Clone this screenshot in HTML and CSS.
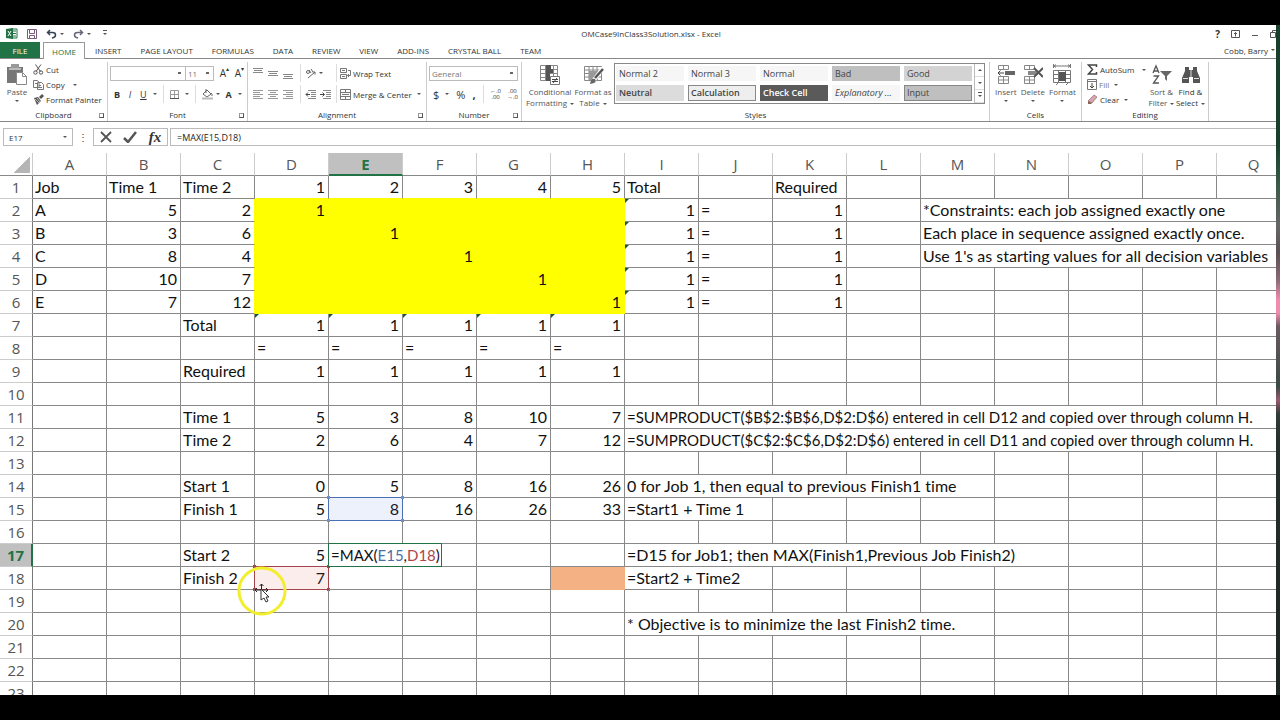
FILE: index.html
```
<!DOCTYPE html>
<html lang="en">
<head>
<meta charset="utf-8">
<title>OMCase9InClass3Solution.xlsx - Excel</title>
<link rel="stylesheet" href="styles.css">
</head>
<body>
<div class="frame">
<div class="app">
  <header class="titlebar">
    <div class="quick">
      <svg class="logo" width="12" height="11" viewBox="0 0 12 11"><path d="M5 1h6v9H5z" fill="#fff" stroke="#217346"/><path d="M7 3h3M7 5.500h3M7 8h3" stroke="#217346"/><path d="M0 1l7-1v11l-7-1z" fill="#217346"/><path d="M2 3l3 5M5 3L2 8" stroke="#fff"/></svg>
      <button class="ic" aria-label="Save"><svg width="10" height="10" viewBox="0 0 10 10" fill="none" stroke="#7a5a7e"><path d="M.5.5h9v9h-9z"/><path d="M2.500.5v4h5v-4M2.500 9.500v-3h5v3"/></svg></button>
      <button class="ic undo" aria-label="Undo"><svg width="11" height="10" viewBox="0 0 11 10" fill="none" stroke="#345" stroke-width="1.500"><path d="M4 1L1.500 3.500 4 6M2 3.500h4.500q3 0 3 2.500T6 9"/></svg><i class="caret"></i></button>
      <button class="ic redo" aria-label="Redo"><svg width="11" height="10" viewBox="0 0 11 10" fill="none" stroke="#667" stroke-width="1.500"><path d="M7 1l2.500 2.500L7 6M9 3.500H4.500q-3 0-3 2.500T5 9"/></svg><i class="caret"></i></button>
      <button class="ic" aria-label="Customize Quick Access Toolbar"><i class="caret bar"></i></button>
    </div>
    <h1>OMCase9InClass3Solution.xlsx - Excel</h1>
    <div class="winbtns">
      <button class="ic help" aria-label="Help">?</button>
      <button class="ic" aria-label="Ribbon Display Options"><svg width="9" height="8" viewBox="0 0 9 8" fill="none" stroke="#555"><path d="M.5.5h8v7h-8zM4.500 6.500v-4M3 4l1.500-1.500L6 4"/></svg></button>
      <button class="ic" aria-label="Minimize"><svg width="8" height="8" viewBox="0 0 8 8"><path d="M1 5.500h6" stroke="#555"/></svg></button>
      <button class="ic" aria-label="Restore"><svg width="6" height="8" viewBox="0 0 6 8" fill="none" stroke="#555"><path d="M.5 2.500h5v5h-5zM2.500 2V.5h5v5H6"/></svg></button>
    </div>
  </header>

  <nav class="tabs">
    <button class="file">FILE</button>
    <button class="active">HOME</button>
    <button>INSERT</button><button>PAGE LAYOUT</button><button>FORMULAS</button><button>DATA</button><button>REVIEW</button><button>VIEW</button><button>ADD-INS</button><button>CRYSTAL BALL</button><button>TEAM</button>
    <button class="user">Cobb, Barry <i class="caret"></i></button>
  </nav>

  <section class="ribbon">
    <div class="group clipboard">
      <div class="body">
        <button class="big"><svg width="22" height="22" viewBox="0 0 22 22"><path d="M1 3h16v16H1z" fill="#777"/><path d="M5 0h8v4H5z" fill="#999"/><path d="M3 5h12" stroke="#fff"/><path d="M10.500 8.500h6l4 4v8h-10z" fill="#fff" stroke="#888"/><path d="M16.500 8.500v4h4" fill="none" stroke="#888"/></svg><span>Paste</span><i class="caret"></i></button>
        <div class="list">
          <button><svg width="11" height="11" viewBox="0 0 11 11" fill="none" stroke="#555"><path d="M2.500.5L7.500 7.500M8 .5L3 7.500"/><circle cx="2.500" cy="8.500" r="1.700"/><circle cx="8" cy="8.500" r="1.700"/></svg>Cut</button>
          <button><svg width="11" height="11" viewBox="0 0 11 11" fill="#fff" stroke="#777"><path d="M.5 1.500h4l1.500 2v5H.5zM4.500 3.500h4l2 2v5h-6z"/><path d="M6 6.500h2M6 8.500h3M2 4.500h2"/></svg>Copy<i class="caret wide"></i></button>
          <button><svg width="11" height="11" viewBox="0 0 11 11"><path d="M6 3l3-3 2 2-3 3z" fill="#555"/><path d="M1 4l4-1 3 4-4 4z" fill="#555"/><path d="M2 5l4 4M4 4l3 4" stroke="#fff" stroke-width=".6"/></svg>Format Painter</button>
        </div>
      </div>
      <footer>Clipboard<i class="launch"></i></footer>
    </div>

    <div class="group font">
      <div class="body rows">
        <div class="row"><select aria-label="Font" class="fname"><option></option></select><select aria-label="Font size" class="fsize"><option>11</option></select><button class="ic grow" aria-label="Increase font size">A<sup>▴</sup></button><button class="ic shrink" aria-label="Decrease font size">A<sup>▾</sup></button></div>
        <div class="row second"><button class="ic"><b>B</b></button><button class="ic ital"><i>I</i></button><button class="ic"><u>U</u><i class="caret wide"></i></button><span class="sep"></span><button class="ic" aria-label="Borders"><svg width="9" height="9" viewBox="0 0 9 9" fill="none" stroke="#999"><path d="M.5.5h8v8h-8zM4.500 0v9M0 4.500h9"/><path d="M0 8.500h9" stroke="#555"/></svg><i class="caret wide"></i></button><span class="sep"></span><button class="ic" aria-label="Fill color"><svg width="11" height="11" viewBox="0 0 11 11" fill="none" stroke="#666"><path d="M1 5l4-4 4 4-4 3zM4 0v4M9 4q1.500 1 1 3"/><path d="M0 9.500h11" stroke="#bbb" stroke-width="2"/></svg><i class="caret"></i></button><button class="ic fc" aria-label="Font color"><b>A</b><i class="caret wide"></i></button></div>
      </div>
      <footer>Font<i class="launch"></i></footer>
    </div>

    <div class="group align">
      <div class="body rows">
        <div class="row"><div class="aligns"><button class="ic" aria-label="Top align"><svg width="10" height="12"><path d="M0 1.500h10M1 3.500h8M0 5.500h10" stroke="#888"/></svg></button><button class="ic" aria-label="Middle align"><svg width="10" height="12"><path d="M0 4.500h10M1 6.500h8M0 8.500h10" stroke="#888"/></svg></button><button class="ic" aria-label="Bottom align"><svg width="10" height="12"><path d="M0 7.500h10M1 9.500h8M0 11.500h10" stroke="#888"/></svg></button></div><span class="sep"></span><div class="mid"><button class="ic" aria-label="Orientation"><svg width="11" height="11" viewBox="0 0 11 11" fill="none" stroke="#666"><circle cx="3" cy="4" r="1.500"/><path d="M4 2l2 3M6 1l2 3M3 10l7-6M10 4H7.500M10 4v2.500"/></svg><i class="caret"></i></button></div><span class="sep"></span><button class="ic text"><svg width="11" height="11" viewBox="0 0 11 11" fill="none" stroke="#777"><path d="M.5.5h6v4h-6zM.5 6.500h6v4h-6zM8 2.500h2.500v5H7.500M9 6L7.500 7.500 9 9M2 2.500h3M2 8.500h3"/></svg>Wrap Text</button></div>
        <div class="row second"><div class="aligns"><button class="ic" aria-label="Align left"><svg width="10" height="9"><path d="M0 .5h10M0 2.500h7M0 4.500h10M0 6.500h7M0 8.500h10" stroke="#999"/></svg></button><button class="ic" aria-label="Center"><svg width="10" height="9"><path d="M0 .5h10M2 2.500h6M0 4.500h10M2 6.500h6M0 8.500h10" stroke="#999"/></svg></button><button class="ic" aria-label="Align right"><svg width="10" height="9"><path d="M0 .5h10M3 2.500h7M0 4.500h10M3 6.500h7M0 8.500h10" stroke="#999"/></svg></button></div><span class="sep"></span><div class="mid"><button class="ic" aria-label="Decrease indent"><svg width="11" height="9" fill="none" stroke="#888"><path d="M3 .5h8M6 2.500h5M6 4.500h5M6 6.500h5M3 8.500h8"/><path d="M5 4.500H1M3 2.500l-2 2 2 2" stroke="#444"/></svg></button><button class="ic" aria-label="Increase indent"><svg width="11" height="9" fill="none" stroke="#888"><path d="M3 .5h8M6 2.500h5M6 4.500h5M6 6.500h5M3 8.500h8"/><path d="M0 4.500h4M2.500 2.500l2 2-2 2" stroke="#444"/></svg></button></div><span class="sep"></span><button class="ic text"><svg width="11" height="11" viewBox="0 0 11 11" fill="none" stroke="#777"><path d="M.5.5h10v10H.5zM0 3.500h11M0 7.500h11M5.500 0v3M5.500 8v3M2 5.500h7"/></svg>Merge &amp; Center<i class="caret"></i></button></div>
      </div>
      <footer>Alignment<i class="launch"></i></footer>
    </div>

    <div class="group number">
      <div class="body rows">
        <div class="row"><select aria-label="Number format" class="nfmt"><option>General</option></select></div>
        <div class="row second"><button class="ic sym">$<i class="caret wide"></i></button><button class="ic sym">%</button><button class="ic sym"><b>,</b></button><span class="sep"></span><button class="ic dec" aria-label="Increase decimal"><span>←.0</span><span>.00</span></button><button class="ic dec" aria-label="Decrease decimal"><span>.00</span><span>→.0</span></button></div>
      </div>
      <footer>Number<i class="launch"></i></footer>
    </div>

    <div class="group styles">
      <div class="body">
        <button class="big cf"><svg width="22" height="22" viewBox="0 0 22 22"><path d="M1.500 1.500h17v15h-17zM1 5.500h18M1 9.500h18M1 13.500h18M6.500 1v16M14.500 1v16" fill="none" stroke="#888"/><path d="M7 1h5v4h2v4h-3v8H7z" fill="#555"/><path d="M11.500 12.500h9v8h-9z" fill="#fff" stroke="#777"/><path d="M13 15.500h6M13 17.500h6M18 14l-4 5" stroke="#444" fill="none"/></svg><span>Conditional<br>Formatting<i class="caret"></i></span></button>
        <button class="big ft"><svg width="22" height="22" viewBox="0 0 22 22"><path d="M2.500 2.500h17v14h-17zM2 6h18M2 9.500h18M2 13h18M7 2v15M11 2v15M15 2v15" fill="none" stroke="#888"/><path d="M7 7h9v9H7z" fill="#999"/><path d="M21 4L12 16" stroke="#fff" stroke-width="4"/><path d="M21 5l-8 9" stroke="#555" stroke-width="2.500"/><path d="M8 20q1-6 5-5 3 4-5 5z" fill="#666"/></svg><span>Format as<br>Table<i class="caret"></i></span></button>
        <div class="gallery">
          <div class="swatches">
            <button>Normal 2</button><button>Normal 3</button><button>Normal</button><button class="bad">Bad</button><button class="good">Good</button>
            <button class="neutral">Neutral</button><button class="calc">Calculation</button><button class="check">Check Cell</button><button class="expl">Explanatory ...</button><button class="input">Input</button>
          </div>
          <div class="scroll"><button aria-label="Previous styles"><i class="caret up"></i></button><button aria-label="Next styles"><i class="caret"></i></button><button aria-label="More styles"><i class="caret bar"></i></button></div>
        </div>
      </div>
      <footer>Styles</footer>
    </div>

    <div class="group cells">
      <div class="body">
        <button class="big"><svg width="20" height="22" viewBox="0 0 20 22"><path d="M2.500 1.500h10v4h-10zM7.500 1.500v4M2.500 12.500h10v7h-10zM7.500 12.500v7M2.500 16h10" fill="none" stroke="#888"/><path d="M9 7h10v4H9z" fill="#666"/><path d="M8 9H2M4.500 6.500L2 9l2.500 2.500" fill="none" stroke="#444"/></svg><span>Insert</span><i class="caret"></i></button>
        <button class="big"><svg width="20" height="22" viewBox="0 0 20 22"><path d="M1.500 1.500h10v4h-10zM6.500 1.500v4M1.500 12.500h10v7h-10zM6.500 12.500v7M1.500 16h10" fill="none" stroke="#888"/><path d="M5 7h9v4H5z" fill="#888"/><path d="M11 4l9 9M20 4l-9 9" fill="none" stroke="#555" stroke-width="2"/></svg><span>Delete</span><i class="caret"></i></button>
        <button class="big"><svg width="20" height="22" viewBox="0 0 20 22"><path d="M1.500 0v4M18.500 0v4M2 2h16M4 .5L2 2l2 1.500M16 .5L18 2l-2 1.500M1.500 6.500h17v12h-17zM1 10.500h18M1 14.500h18M6.500 6v13M13.500 6v13M4 21l2-2M14 21l2-2" fill="none" stroke="#777"/><path d="M7 8h7v9H7z" fill="#555"/></svg><span>Format</span><i class="caret"></i></button>
      </div>
      <footer>Cells</footer>
    </div>

    <div class="group editing">
      <div class="body">
        <div class="list">
          <button><svg width="11" height="11" viewBox="0 0 11 11" fill="none" stroke="#444" stroke-width="1.500"><path d="M9.500 3V1H1.500l4 4.500-4 4.500h8V8"/></svg>AutoSum<i class="caret wide"></i></button>
          <button class="dim"><svg width="10" height="11" viewBox="0 0 10 11" fill="none" stroke="#777"><path d="M.5.5h9v10h-9zM.5 2.500h9"/><path d="M5 4v5M3 7l2 2 2-2" stroke="#444"/></svg>Fill<i class="caret"></i></button>
          <button><svg width="11" height="11" viewBox="0 0 11 11"><path d="M1 7l6-6 3 2-5 6z" fill="#d7a5ad" stroke="#9b6670" stroke-width=".7"/><path d="M1 7l4 2-1 1H1z" fill="#865"/></svg>Clear<i class="caret"></i></button>
        </div>
        <button class="big"><svg width="22" height="22" viewBox="0 0 22 22"><path d="M2 9l3-7 3 7M3 7h4M2.500 12h5l-5 7h5.500" fill="none" stroke="#555" stroke-width="1.300"/><path d="M9 7h12l-5 5v5l-2-2v-3z" fill="#666"/></svg><span>Sort &amp;<br>Filter<i class="caret"></i></span></button>
        <button class="big dark"><svg width="22" height="22" viewBox="0 0 22 22" fill="#555"><path d="M5 3h4v3h4V3h4v4l3 7v5h-7v-6h-4v6H2v-5l3-7z"/><path d="M3 14.500h5M14 14.500h5M11 6v7" stroke="#ddd"/></svg><span>Find &amp;<br>Select<i class="caret"></i></span></button>
      </div>
      <footer>Editing</footer>
    </div>
  </section>

  <section class="formulabar">
    <button class="namebox"><span>E17</span><i class="caret"></i></button>
    <span class="dots">⋮</span>
    <div class="fbtns">
      <button class="ic" aria-label="Cancel"><svg width="12" height="12" viewBox="0 0 12 12" stroke="#555" stroke-width="1.800"><path d="M1 1l10 10M11 1L1 11"/></svg></button>
      <button class="ic" aria-label="Enter"><svg width="14" height="12" viewBox="0 0 14 12" fill="none" stroke="#555" stroke-width="2.500"><path d="M1 7l4 4 8-10"/></svg></button>
      <button class="ic fx" aria-label="Insert Function"><i>fx</i></button>
    </div>
    <input class="formula" aria-label="Formula" value="=MAX(E15,D18)">
  </section>

  <main class="sheet"><table id="grid"></table></main>
</div>
<div class="edge"></div>
</div>
<script src="sheet.js"></script>
</body>
</html>
```
FILE: styles.css
```
* { box-sizing: border-box; }
body { margin: 0; background: #000; font-family: "Open Sans", "Noto Sans", sans-serif; font-size: 8px; color: #333; }
button, input, select { font: inherit; color: inherit; background: none; border: 0; padding: 0; margin: 0; border-radius: 0; }
button { display: flex; align-items: center; white-space: nowrap; }
svg { flex: none; display: block; }

.frame { display: flex; height: 100vh; padding: 25px 0; }
.app { flex: 1; min-width: 0; display: flex; flex-direction: column; background: #fff; overflow: hidden; }
.edge { width: 4px; background: linear-gradient(#173f2c 0 18%, #3c5a48 24%, #666 30%, #5a5054 34%, #8a6a74 38%, #f08cb0 41% 43%, #6a5a60 45%, #3a4a42 54%, #9a5a70 56%, #333c38 58%, #26302b 62%, #1c2420); }

.caret { flex: none; display: inline-block; width: 0; height: 0; border: 2px solid transparent; border-top-color: #555; border-bottom: 0; margin-left: 3px; vertical-align: middle; }
.caret.wide { margin-left: 6px; }
.caret.up { border-top: 0; border-bottom: 2px solid #555; }
.caret.bar { position: relative; }
.caret.bar::before { content: ""; position: absolute; left: -2px; top: -5px; width: 4px; height: 1px; background: #555; }

.titlebar { display: grid; grid-template-columns: 1fr auto 1fr; align-items: center; height: 17px; flex: none; }
.titlebar h1 { margin: 0; font-size: 8px; font-weight: 400; padding-left: 26px; }
.quick { display: flex; align-items: center; gap: 9px; padding-left: 6px; }
.winbtns { display: flex; justify-content: flex-end; align-items: center; gap: 11px; }
.help { font-size: 10px; font-weight: 700; }

.tabs { display: flex; height: 17px; flex: none; font-size: 8px; border-bottom: 1px solid #888; padding-right: 1px; }
.tabs button { margin-right: 19px; }
.tabs .file { width: 40px; justify-content: center; background: #217346; color: #fff; margin-right: 3px; }
.tabs .active { width: 42px; justify-content: center; border: 1px solid #999; border-bottom: 0; background: #fff; color: #217346; height: 17px; margin-right: 10px; }
.tabs .user { margin-left: auto; margin-right: 0; }

.ribbon { display: flex; height: 63px; flex: none; border-bottom: 1px solid #888; padding-top: 3px; }
.group { display: flex; flex-direction: column; flex: none; border-right: 1px solid #ccc; }
.group .body { flex: 1; display: flex; align-items: flex-start; min-height: 0; }
.group footer { display: flex; flex: none; justify-content: center; height: 12px; line-height: 12px; position: relative; }
.launch { position: absolute; right: 3px; bottom: 3px; width: 5px; height: 5px; border: 1px solid #999; border-right-color: #555; border-bottom-color: #555; }
.clipboard { width: 108px; } .font { width: 140px; } .align { width: 179px; } .number { width: 95px; }
.styles { width: 468px; } .cells { width: 92px; } .editing { width: 127px; }
.clipboard .body { padding-left: 6px; gap: 5px; }

.big { flex-direction: column; line-height: 11px; padding-top: 2px; color: #555; text-align: center; }
.big > .caret { margin: 3px 0 0; }
.big.dark { color: #333; }
.list { display: flex; flex-direction: column; }
.list button { height: 15px; gap: 2px; }
.list .dim { color: #777; }

.rows { flex-direction: column; }
.row { display: flex; align-items: center; height: 22px; align-self: stretch; }
.row.second { height: 20px; }
.ic { justify-content: center; }
.sep { width: 1px; height: 18px; background: #ddd; }
select { appearance: none; border: 1px solid #bbb; height: 15px; color: #777; padding-left: 2px; background: linear-gradient(#666, #666) right 4px center / 3px 2px no-repeat; }
.font .rows { padding-left: 2px; }
.fname { width: 76px; } .fsize { width: 29px; margin-left: -1px; }
.grow, .shrink { font-size: 10px; width: 15px; }
.grow { margin-left: 3px; }
sup { font-size: 6px; line-height: 6px; align-self: flex-start; }
.font .second { gap: 6px; padding-left: 4px; font-size: 9px; }
.font .second .ital { width: 8px; }
.align .rows { padding-left: 5px; }
.aligns { display: flex; gap: 5px; width: 47px; }
.mid { display: flex; gap: 4px; width: 35px; padding-left: 4px; }
.text { gap: 2px; padding-left: 3px; }
.number .rows { padding-left: 2px; }
.nfmt { width: 89px; }
.number .second { gap: 7px; padding-left: 4px; }
.sym { font-size: 11px; }
.dec { flex-direction: column; font-size: 6px; line-height: 6px; width: 10px; }

.styles .body { padding-left: 6px; }
.cf { width: 44px; } .ft { width: 42px; }
.gallery { display: flex; height: 41px; border: 1px solid #888; margin-top: 1px; }
.swatches { display: grid; grid-template-columns: repeat(5, 68px); column-gap: 4px; row-gap: 4px; padding: 2px 2px 2px 1px; }
.swatches button { background: #f6f6f6; padding-left: 3px; font-size: 9px; color: #444; }
.swatches .bad, .swatches .input { background: #bfbfbf; }
.swatches .good { background: #d3d3d3; }
.swatches .neutral { background: #dcdcdc; font-weight: 600; }
.swatches .calc { background: #eee; border: 1px solid #888; font-weight: 600; padding-left: 2px; }
.swatches .check { background: #5a5a5a; color: #fff; font-weight: 600; }
.swatches .expl { font-style: italic; }
.swatches .input { border: 1px solid #888; padding-left: 2px; }
.scroll { width: 10px; display: grid; grid-template-rows: repeat(3, 1fr); border-left: 1px solid #bbb; }
.scroll button { justify-content: center; border-bottom: 1px solid #ddd; }
.scroll .caret { margin: 0; }
.cells .body { justify-content: space-around; padding: 0 3px; }
.editing .body { padding-left: 5px; }
.editing .list { width: 60px; }
.editing .big { width: 29px; }

.formulabar { display: flex; align-items: center; height: 18px; margin: 6px 0 7px; flex: none; }
.namebox { width: 70px; height: 18px; margin-left: 3px; padding: 0 5px; border: 1px solid #bbb; justify-content: space-between; }
.dots { width: 20px; text-align: center; font-size: 10px; }
.fbtns { display: flex; align-items: center; justify-content: space-around; width: 75px; height: 18px; border: 1px solid #bbb; }
.fx { font: italic 700 15px/15px "Liberation Serif", serif; }
.formula { flex: 1; height: 18px; margin-left: 2px; padding-left: 6px; border: 1px solid #bbb; border-right: 0; color: #222; font-size: 9px; }

.sheet { flex: 1; min-height: 0; overflow: hidden; }
#grid { table-layout: fixed; width: 1291px; border-collapse: separate; border-spacing: 0; font: 16px/22px Lato, sans-serif; font-variant-ligatures: none; color: #111; }
#grid .c0 { width: 33px; }
#grid .cn { width: 74px; }
#grid th { font: 400 15px/20px "Open Sans", sans-serif; color: #555; padding: 0; border-right: 1px solid #ccc; border-bottom: 1px solid #888; }
#grid thead th { height: 23px; }
#grid tbody th { border-bottom-color: #ccc; border-right-color: #777; }
#grid th.on { background: #c0c0c0; color: #217346; font-weight: 700; }
#grid thead th.on { border-bottom: 2px solid #217346; }
#grid tbody th.on { border-right: 2px solid #217346; }
#grid td { height: 23px; padding: 0 2px; border-right: 1px solid #888; border-bottom: 1px solid #888; white-space: nowrap; position: relative; }
#grid td.num { text-align: right; padding-right: 3px; }
#grid td.long { font-size: 15px; }
#grid td.yellow { background: #ff0; border-color: #ff0; }
#grid td.yr { border-right-color: #ff0; }
#grid td.yb { border-bottom-color: #ff0; }
#grid td.orange { background: #f4b183; border-color: #f4b183; }
#grid td.flag::before { content: ""; position: absolute; left: 0; top: 0; border: 2px solid #175c2c; border-right-color: transparent; border-bottom-color: transparent; }
.corner { display: block; width: 16px; height: 16px; margin: 2px 0 0 14px; background: linear-gradient(135deg, transparent 50%, #b5b5b5 50%); }
.ref { position: absolute; inset: -1px; border: 1px solid #4a6fb5; background: rgba(80, 120, 220, .1); }
.ref.red { border-color: #a3444c; background: rgba(230, 80, 80, .1); }
.ref i { position: absolute; width: 3px; height: 3px; background: #6f8fc9; }
.ref.red i { background: #a3444c; }
.ref i:nth-child(1) { left: -2px; top: -2px; }
.ref i:nth-child(2) { right: -2px; top: -2px; }
.ref i:nth-child(3) { left: -2px; bottom: -2px; }
.ref i:nth-child(4) { right: -2px; bottom: -2px; }
.editor { position: absolute; left: -1px; top: -1px; height: 24px; min-width: 75px; padding: 0 1px 0 2px; border: 1px solid #217346; border-right-color: #555; background: #fff; z-index: 1; font-size: 15px; }
.editor .b { color: #4a6fa5; }
.editor .r { color: #b0444a; }
.pointer { position: absolute; left: -18px; top: -1px; z-index: 2; }
```
FILE: sheet.js
```
const COLS = "ABCDEFGHIJKLMNOPQ".split("");
const cells = {
  A1: "Job", B1: "Time 1", C1: "Time 2", D1: 1, E1: 2, F1: 3, G1: 4, H1: 5, I1: "Total", K1: "Required",
  A2: "A", B2: 5, C2: 2, D2: 1, A3: "B", B3: 3, C3: 6, E3: 1, A4: "C", B4: 8, C4: 4, F4: 1,
  A5: "D", B5: 10, C5: 7, G5: 1, A6: "E", B6: 7, C6: 12, H6: 1,
  C7: "Total", C9: "Required",
  C11: "Time 1", D11: 5, E11: 3, F11: 8, G11: 10, H11: 7,
  C12: "Time 2", D12: 2, E12: 6, F12: 4, G12: 7, H12: 12,
  C14: "Start 1", D14: 0, E14: 5, F14: 8, G14: 16, H14: 26,
  C15: "Finish 1", D15: 5, E15: 8, F15: 16, G15: 26, H15: 33, I15: "=Start1 + Time 1",
  C17: "Start 2", D17: 5, C18: "Finish 2", D18: 7, I18: "=Start2 + Time2",
  M2: "*Constraints: each job assigned exactly one",
  M3: "Each place in sequence assigned exactly once.",
  M4: "Use 1's as starting values for all decision variables",
  I11: "=SUMPRODUCT($B$2:$B$6,D$2:D$6) entered in cell D12 and copied over through column H.",
  I12: "=SUMPRODUCT($C$2:$C$6,D$2:D$6) entered in cell D11 and copied over through column H.",
  I14: "0 for Job 1, then equal to previous Finish1 time",
  I17: "=D15 for Job1; then MAX(Finish1,Previous Job Finish2)",
  I20: "* Objective is to minimize the last Finish2 time."
};
const spans = { M2: 5, M3: 5, M4: 5, I11: 9, I12: 9, I14: 5, I15: 2, I17: 6, I18: 2, I20: 5 };
for (let r = 2; r <= 6; r++) { cells["I" + r] = 1; cells["J" + r] = "="; cells["K" + r] = 1; }
for (const c of "DEFGH") { cells[c + 7] = 1; cells[c + 8] = "="; cells[c + 9] = 1; }

const handles = "<i></i><i></i><i></i><i></i>";
const overlays = {
  E15: `<div class="ref">${handles}</div>`,
  E17: `<div class="editor" role="textbox" aria-label="Cell E17" contenteditable="true">=MAX(<span class="b">E15</span>,<span class="r">D18</span>)</div>`,
  D18: `<div class="ref red">${handles}</div><svg class="pointer" width="50" height="50" viewBox="0 0 50 50"><circle cx="25" cy="25" r="23" fill="none" stroke="#f2ee2c" stroke-width="3"/><path d="M18 24h13M24.500 18v12M20 22l-2 2 2 2M29 22l2 2-2 2M22.500 20l2-2 2 2" fill="none" stroke="#222"/><path d="M24 23v11l3-2 2 4 2-1-2-4h3z" fill="#fff" stroke="#333"/></svg>`
};

let html = `<colgroup><col class="c0">${COLS.map(() => '<col class="cn">').join("")}</colgroup>`;
html += `<thead><tr><th><span class="corner"></span></th>${COLS.map(c => `<th scope="col"${c === "E" ? ' class="on"' : ""}>${c}</th>`).join("")}</tr></thead><tbody>`;
for (let r = 1; r <= 23; r++) {
  html += `<tr><th scope="row"${r === 17 ? ' class="on"' : ""}>${r}</th>`;
  for (let i = 0; i < COLS.length; i++) {
    const c = COLS[i], id = c + r, v = cells[id] ?? "", cls = [];
    const inBlock = "DEFGH".includes(c);
    const span = spans[id] || 1;
    if (typeof v === "number") cls.push("num");
    if (span > 8) cls.push("long");
    if (inBlock && r >= 2 && r <= 6) cls.push("yellow");
    if (c === "C" && r >= 2 && r <= 6) cls.push("yr");
    if (inBlock && r === 1) cls.push("yb");
    if (id === "H18") cls.push("orange");
    if ((c === "I" && r >= 2 && r <= 6) || (inBlock && r === 7)) cls.push("flag");
    html += `<td class="${cls.join(" ")}" colspan="${span}">${v}${overlays[id] || ""}</td>`;
    i += span - 1;
  }
  html += "</tr>";
}
document.getElementById("grid").innerHTML = html + "</tbody>";
```
